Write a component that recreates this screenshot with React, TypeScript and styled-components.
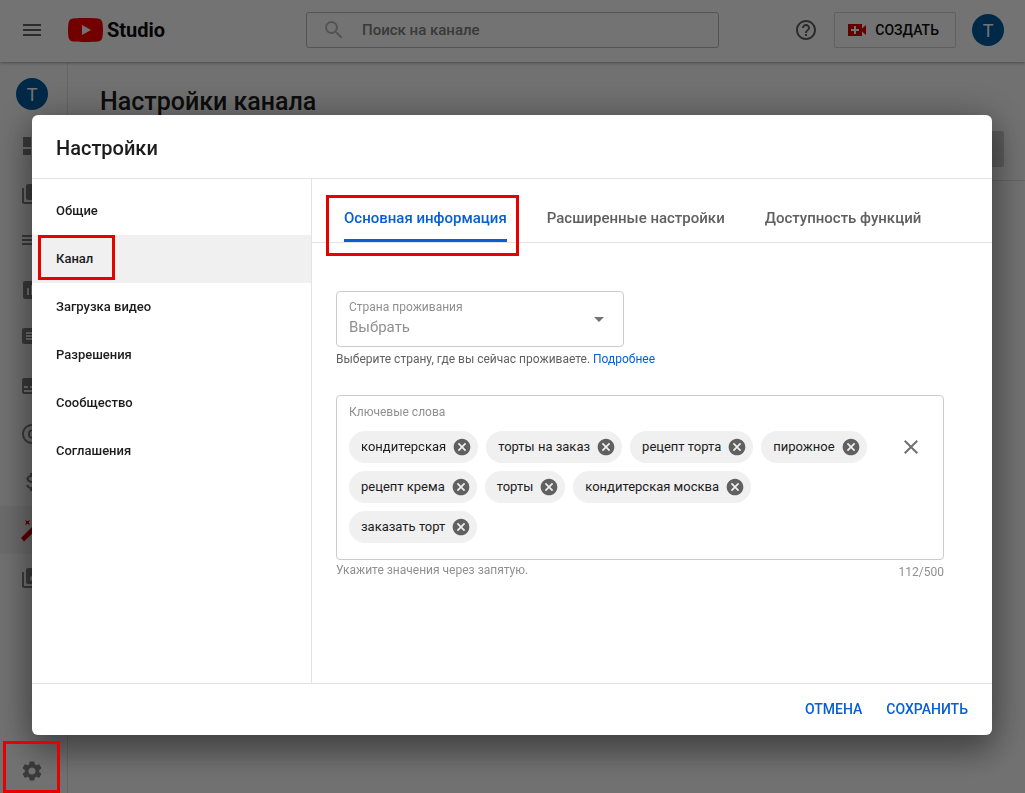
import React from 'react';
import styled, { createGlobalStyle } from 'styled-components';
import {
  MdArrowDropDown,
  MdAttachMoney,
  MdCancel,
  MdClose,
  MdComment,
  MdCopyright,
  MdDashboard,
  MdHelpOutline,
  MdInsertChart,
  MdLibraryMusic,
  MdMenu,
  MdSearch,
  MdSettings,
  MdSubtitles,
  MdVideoLibrary,
} from 'react-icons/md';

const GlobalStyle = createGlobalStyle`
  *, *::before, *::after { box-sizing: border-box; }
  body {
    margin: 0;
    font-family: Roboto, "Liberation Sans", sans-serif;
    color: #1c1c1c;
    background: #fafafa;
  }
  button, input, select { font-family: inherit; }
  button { margin: 0; padding: 0; border: 0; background: none; cursor: pointer; }
  h1, h2, p, ul { margin: 0; padding: 0; }
  ul { list-style: none; }
  a { text-decoration: none; }
`;

/* ---------- page behind the dialog ---------- */

const Shell = styled.div`
  display: flex;
  flex-direction: column;
  height: 100vh;
  overflow: hidden;
`;

const TopBar = styled.header`
  display: flex;
  align-items: center;
  flex: none;
  height: 62px;
  padding: 0 21px 2px 20px;
  background: #fff;
  box-shadow: 0 1px 3px rgba(0, 0, 0, 0.35);
  z-index: 1;
`;

const Brand = styled.div`
  display: flex;
  align-items: center;
  flex: 0 0 286px;
  gap: 24px;
`;

const IconButton = styled.button`
  display: grid;
  place-items: center;
  width: 24px;
  height: 24px;
  color: #606060;
`;

const Logo = styled.a`
  display: flex;
  align-items: center;
  gap: 4px;
  color: #0d0d0d;
  font-size: 20px;
  line-height: 28px;
  font-weight: 700;
`;

const Search = styled.label`
  display: flex;
  align-items: center;
  flex: 1 1 412px;
  max-width: 560px;
  height: 36px;
  padding: 0 15px;
  gap: 14px;
  border: 1px solid #bbb;
  border-radius: 3px;
  color: #bbb;
`;

const SearchInput = styled.input`
  flex: 1;
  min-width: 0;
  border: 0;
  outline: 0;
  background: none;
  font-size: 15px;
  font-weight: 500;
  &::placeholder { color: #808080; opacity: 1; }
`;

const TopActions = styled.div`
  display: flex;
  align-items: center;
  margin-left: auto;
  padding-left: 75px;
  gap: 16px;
`;

const CreateButton = styled.button`
  display: flex;
  align-items: center;
  height: 36px;
  padding: 0 16px 0 10px;
  gap: 6px;
  border: 1px solid #d4d4d4;
  border-radius: 2px;
  color: #0d0d0d;
  font-size: 14px;
  font-weight: 500;
`;

const Avatar = styled.span`
  display: grid;
  place-items: center;
  width: 32px;
  height: 32px;
  border-radius: 50%;
  background: #005b9f;
  color: #fff;
  font-size: 18px;
`;

const Columns = styled.div`
  display: flex;
  flex: 1;
  min-height: 0;
`;

const Rail = styled.nav`
  display: flex;
  flex-direction: column;
  flex: 0 0 68px;
  padding-top: 16px;
  border-right: 1px solid #e0e0e0;
`;

const RailAccount = styled.a`
  display: block;
  padding-left: 16px;
`;

const RailList = styled.ul`
  width: 100%;
  margin-top: 12px;
`;

const RailLink = styled.a<{ $active?: boolean }>`
  display: flex;
  align-items: center;
  height: 48px;
  padding-left: 20px;
  color: ${(p) => (p.$active ? '#c00' : '#808080')};
  background: ${(p) => (p.$active ? '#eee' : 'none')};
`;

const RailSettings = styled.a`
  display: flex;
  align-items: center;
  width: 100%;
  height: 44px;
  margin-top: auto;
  padding-left: 20px;
  color: #808080;
`;

const Main = styled.main`
  flex: 1;
`;

const PageHeader = styled.div`
  padding: 23px 21px 13px 32px;
  border-bottom: 1px solid #ddd;
`;

const PageTitle = styled.h1`
  font-size: 25px;
  line-height: 34px;
  font-weight: 500;
`;

const PageActions = styled.div`
  display: flex;
  justify-content: flex-end;
  margin-top: 12px;
`;

const PublishButton = styled.button`
  width: 130px;
  height: 36px;
  border-radius: 2px;
  background: #ccc;
`;

/* ---------- dialog ---------- */

const Backdrop = styled.div`
  position: fixed;
  inset: 0;
  z-index: 2;
  display: flex;
  align-items: flex-start;
  padding: 115px 32px 0;
  background: rgba(0, 0, 0, 0.55);
`;

const Dialog = styled.section`
  display: flex;
  flex-direction: column;
  width: 100%;
  max-width: 960px;
  border-radius: 6px;
  background: #fff;
  box-shadow: 0 16px 32px rgba(0, 0, 0, 0.3), 0 4px 40px 4px rgba(0, 0, 0, 0.25);
`;

const DialogHeader = styled.header`
  padding: 18px 24px 15px;
  border-bottom: 1px solid #e3e3e3;
`;

const DialogTitle = styled.h2`
  font-size: 20px;
  line-height: 30px;
  font-weight: 500;
`;

const DialogBody = styled.div`
  display: flex;
  min-height: 504px;
`;

const SideNav = styled.nav`
  flex: 0 0 280px;
  padding-top: 8px;
  border-right: 1px solid #e3e3e3;
`;

const SideLink = styled.a<{ $active?: boolean }>`
  position: relative;
  display: flex;
  align-items: center;
  height: 48px;
  padding: 0 24px 2px;
  color: #1c1c1c;
  background: ${(p) => (p.$active ? '#f0f0f0' : 'none')};
  font-size: 13px;
  font-weight: 500;
`;

const Marker = styled.span`
  position: absolute;
  border: 3px solid #e60000;
  pointer-events: none;
`;

const NavMarker = styled(Marker)`
  top: 0;
  left: 6px;
  width: 77px;
  height: 45px;
`;

const TabMarker = styled(Marker)`
  inset: 16px -12px -17px -18px;
`;

const RailMarker = styled(Marker)`
  left: 3px;
  bottom: 0;
  width: 57px;
  height: 52px;
`;

const Panel = styled.div`
  flex: 1;
  min-width: 0;
`;

const Tabs = styled.div`
  display: flex;
  height: 64px;
  padding: 0 32px;
  gap: 40px;
  border-bottom: 1px solid #e3e3e3;
`;

const Tab = styled.button<{ $active?: boolean }>`
  position: relative;
  padding-top: 18px;
  color: ${(p) => (p.$active ? '#065fd4' : '#606060')};
  font-size: 15px;
  line-height: 42px;
  font-weight: 500;
  white-space: nowrap;
  border-bottom: 3px solid ${(p) => (p.$active ? '#065fd4' : 'transparent')};
`;

const Form = styled.form`
  padding: 48px 48px 0 24px;
`;

const CountryField = styled.div`
  position: relative;
  width: 288px;
  height: 56px;
  border: 1px solid #ccc;
  border-radius: 4px;
  color: #737373;
`;

const FieldLabel = styled.label`
  display: block;
  color: #909090;
  font-size: 12px;
  line-height: 16px;
`;

const CountryLabel = styled(FieldLabel)`
  position: absolute;
  top: 7px;
  left: 12px;
`;

const CountrySelect = styled.select`
  width: 100%;
  height: 54px;
  padding: 16px 12px 0;
  border: 0;
  outline: 0;
  appearance: none;
  background: none;
  color: #909090;
  font-size: 15px;
`;

const SelectArrow = styled(MdArrowDropDown)`
  position: absolute;
  top: 15px;
  right: 12px;
  pointer-events: none;
`;

const Hint = styled.p`
  color: #606060;
  font-size: 12px;
  line-height: 16px;
  margin-top: 4px;
`;

const HintLink = styled.a`
  color: #065fd4;
`;

const KeywordField = styled.div`
  margin-top: 28px;
  padding: 8px 12px 16px;
  border: 1px solid #ccc;
  border-radius: 4px;
`;

const KeywordRow = styled.div`
  display: flex;
  align-items: flex-start;
  gap: 8px;
  margin-top: 11px;
`;

const Chips = styled.ul`
  display: flex;
  flex: 1;
  flex-wrap: wrap;
  gap: 8px;
`;

const Chip = styled.li`
  display: flex;
  align-items: center;
  height: 32px;
  padding: 0 4px 0 12px;
  gap: 4px;
  border-radius: 16px;
  background: #f0f0f0;
  font-size: 13px;
`;

const ChipText = styled.span`
  padding-bottom: 2px;
`;

const ClearButton = styled.button`
  display: grid;
  place-items: center;
  width: 40px;
  height: 32px;
  color: #707070;
`;

const FieldFooter = styled.div`
  display: flex;
  justify-content: space-between;
  padding-top: 2px;
  color: #909090;
  font-size: 12px;
  line-height: 16px;
`;

const Counter = styled.span`
  padding-top: 2px;
`;

const DialogFooter = styled.footer`
  display: flex;
  justify-content: flex-end;
  align-items: center;
  gap: 24px;
  height: 52px;
  padding: 0 24px 2px;
  border-top: 1px solid #e3e3e3;
`;

const TextButton = styled.button`
  color: #065fd4;
  font-size: 14px;
  line-height: 36px;
  font-weight: 500;
`;

/* ---------- drawings ---------- */

const LogoMark = () => (
  <svg width="35" height="24" viewBox="0 0 35 24" aria-hidden="true">
    <path
      fill="#f00"
      d="M34.2 3.8A4.4 4.4 0 0 0 31.1.7C28.4 0 17.5 0 17.5 0S6.6 0 3.9.7A4.4 4.4 0 0 0 .8 3.8C0 6.5 0 12 0 12s0 5.5.8 8.2a4.400 4.400 0 0 0 3.1 3.1C6.6 24 17.5 24 17.5 24s10.9 0 13.6-.7a4.400 4.400 0 0 0 3.1-3.1C35 17.5 35 12 35 12s0-5.5-.8-8.2z"
    />
    <path fill="#fff" d="M14 7v10l9-5z" />
  </svg>
);

const CreateIcon = () => (
  <svg width="24" height="24" viewBox="0 0 24 24" aria-hidden="true">
    <path fill="#d00" d="M3 6h14v4.500L21 7v10l-4-3.500V18H3z" />
    <path fill="#fff" d="M9 8h2v3h3v2h-3v3H9v-3H6v-2h3z" />
  </svg>
);

const PlaylistIcon = () => (
  <svg width="24" height="24" viewBox="0 0 24 24" fill="currentColor" aria-hidden="true">
    <path d="M2 5h14v2H2zM2 9h14v2H2zM2 13h10v2H2zM14 13v8l7-4z" />
  </svg>
);

const WandIcon = () => (
  <svg width="24" height="24" viewBox="0 0 24 24" fill="currentColor" aria-hidden="true">
    <path d="M1 20 14.500 6.500l3.500 3.500L4 23.500z" />
    <path d="m5 2 2.500 1.300L10 2 8.700 4.500 10 7 7.500 5.700 5 7l1.300-2.500z" />
    <path d="m17 2 2.500 1.300L22 2l-1.300 2.500L22 7l-2.500-1.300L17 7l1.300-2.500z" />
  </svg>
);

/* ---------- data ---------- */

const railItems: { label: string; icon: React.ReactNode; active?: boolean }[] = [
  { label: 'Панель управления', icon: <MdDashboard size={24} /> },
  { label: 'Видео', icon: <MdVideoLibrary size={24} /> },
  { label: 'Плейлисты', icon: <PlaylistIcon /> },
  { label: 'Аналитика', icon: <MdInsertChart size={24} /> },
  { label: 'Комментарии', icon: <MdComment size={24} /> },
  { label: 'Субтитры', icon: <MdSubtitles size={24} /> },
  { label: 'Авторские права', icon: <MdCopyright size={24} /> },
  { label: 'Монетизация', icon: <MdAttachMoney size={24} /> },
  { label: 'Настройка канала', icon: <WandIcon />, active: true },
  { label: 'Фонотека', icon: <MdLibraryMusic size={24} /> },
];

const sections = ['Общие', 'Канал', 'Загрузка видео', 'Разрешения', 'Сообщество', 'Соглашения'];
const tabs = ['Основная информация', 'Расширенные настройки', 'Доступность функций'];
const keywords = [
  'кондитерская',
  'торты на заказ',
  'рецепт торта',
  'пирожное',
  'рецепт крема',
  'торты',
  'кондитерская москва',
  'заказать торт',
];

export default function App() {
  return (
    <>
      <GlobalStyle />
      <Shell>
        <TopBar>
          <Brand>
            <IconButton aria-label="Меню">
              <MdMenu size={24} />
            </IconButton>
            <Logo href="#">
              <LogoMark />
              Studio
            </Logo>
          </Brand>
          <Search>
            <MdSearch size={24} />
            <SearchInput type="search" placeholder="Поиск на канале" aria-label="Поиск на канале" />
          </Search>
          <TopActions>
            <IconButton aria-label="Справка">
              <MdHelpOutline size={24} />
            </IconButton>
            <CreateButton>
              <CreateIcon />
              СОЗДАТЬ
            </CreateButton>
            <Avatar>T</Avatar>
          </TopActions>
        </TopBar>
        <Columns>
          <Rail>
            <RailAccount href="#">
              <Avatar>T</Avatar>
            </RailAccount>
            <RailList>
              {railItems.map((item) => (
                <li key={item.label}>
                  <RailLink href="#" aria-label={item.label} $active={item.active}>
                    {item.icon}
                  </RailLink>
                </li>
              ))}
            </RailList>
            <RailSettings href="#" aria-label="Настройки">
              <MdSettings size={24} />
            </RailSettings>
          </Rail>
          <Main>
            <PageHeader>
              <PageTitle>Настройки канала</PageTitle>
              <PageActions>
                <PublishButton aria-label="Опубликовать" />
              </PageActions>
            </PageHeader>
          </Main>
        </Columns>
      </Shell>

      <Backdrop>
        <Dialog role="dialog" aria-labelledby="dialog-title">
          <DialogHeader>
            <DialogTitle id="dialog-title">Настройки</DialogTitle>
          </DialogHeader>
          <DialogBody>
            <SideNav>
              {sections.map((name) => (
                <SideLink key={name} href="#" $active={name === 'Канал'}>
                  {name}
                  {name === 'Канал' && <NavMarker />}
                </SideLink>
              ))}
            </SideNav>
            <Panel>
              <Tabs role="tablist">
                {tabs.map((name, i) => (
                  <Tab key={name} role="tab" aria-selected={i === 0} $active={i === 0}>
                    {name}
                    {i === 0 && <TabMarker />}
                  </Tab>
                ))}
              </Tabs>
              <Form>
                <CountryField>
                  <CountryLabel htmlFor="country">Страна проживания</CountryLabel>
                  <CountrySelect id="country">
                    <option>Выбрать</option>
                  </CountrySelect>
                  <SelectArrow size={24} />
                </CountryField>
                <Hint>
                  Выберите страну, где вы сейчас проживаете. <HintLink href="#">Подробнее</HintLink>
                </Hint>
                <KeywordField>
                  <FieldLabel as="div">Ключевые слова</FieldLabel>
                  <KeywordRow>
                    <Chips>
                      {keywords.map((word) => (
                        <Chip key={word}>
                          <ChipText>{word}</ChipText>
                          <IconButton type="button" aria-label={`Удалить ${word}`}>
                            <MdCancel size={20} />
                          </IconButton>
                        </Chip>
                      ))}
                    </Chips>
                    <ClearButton type="button" aria-label="Очистить">
                      <MdClose size={24} />
                    </ClearButton>
                  </KeywordRow>
                </KeywordField>
                <FieldFooter>
                  <span>Укажите значения через запятую.</span>
                  <Counter>112/500</Counter>
                </FieldFooter>
              </Form>
            </Panel>
          </DialogBody>
          <DialogFooter>
            <TextButton>ОТМЕНА</TextButton>
            <TextButton>СОХРАНИТЬ</TextButton>
          </DialogFooter>
        </Dialog>
        <RailMarker />
      </Backdrop>
    </>
  );
}
